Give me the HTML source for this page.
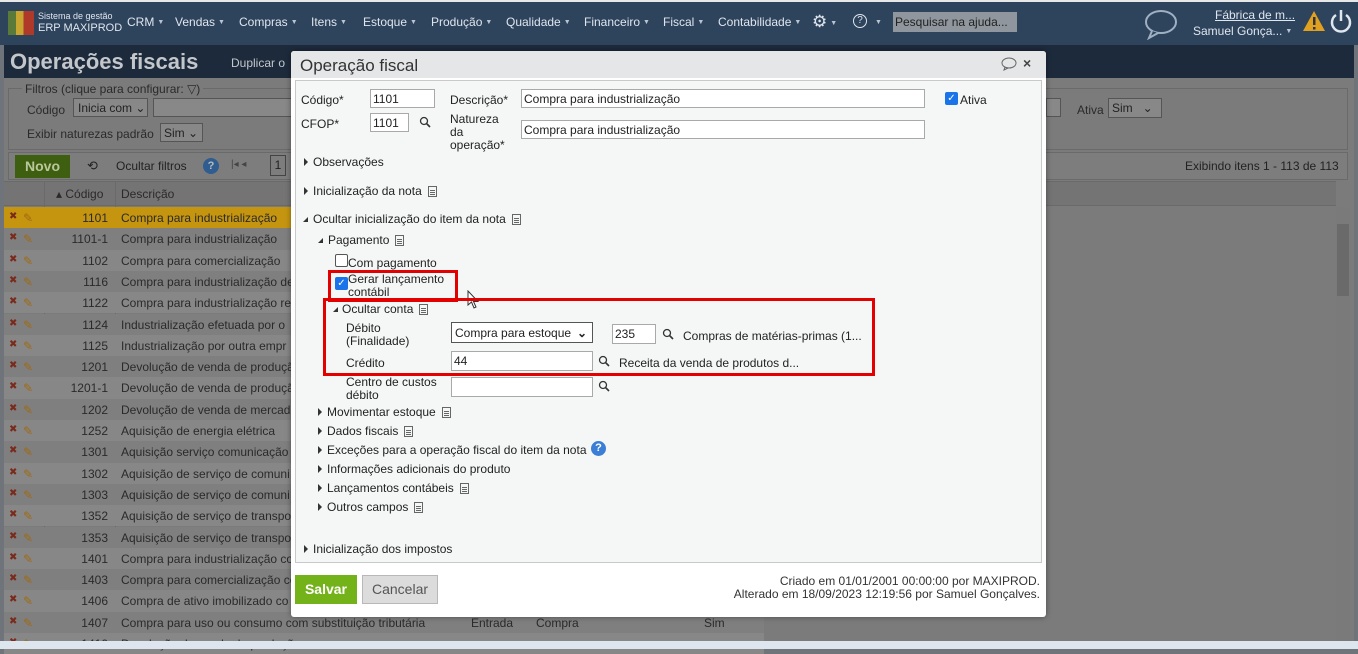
<!DOCTYPE html>
<html><head><meta charset="utf-8"><style>
*{box-sizing:border-box;margin:0;padding:0}
body{width:1358px;height:649px;overflow:hidden;position:relative;background:#6f747a;font-family:"Liberation Sans",sans-serif;font-size:12px;color:#222}
.a{position:absolute;white-space:nowrap}
.nav{left:0;top:0;width:1358px;height:45px;background:#2e435c;border-top:2px solid #e8e8e8;color:#dfe6ee;font-family:"Liberation Sans Narrow","Liberation Sans",sans-serif;font-size:12px}
.nav .a{top:13px}
.tri{font-size:7px;color:#b9c4d0;margin-left:3px;vertical-align:2px}
.page{left:4px;top:45px;width:1350px;height:596px;background:#7b7b7b}
.row{left:4px;width:760px;height:21.3px;font-size:12px;color:#2a2a2a}
.row span{position:absolute;top:4px}
.dlg{left:291px;top:51px;width:755px;height:566px;background:#fff;box-shadow:0 0 6px rgba(0,0,0,.4);border-radius:3px}
.lbl{font-size:12px;color:#222}
.inp{position:absolute;background:#fff;border:1px solid #a9a9a9;height:19px;font-size:12px;padding:2px 2px;color:#222}
.mag{position:absolute;width:12px;height:12px}
.doc{display:inline-block;width:9px;height:11px;border:1px solid #666;margin-left:6px;vertical-align:-2px;background:linear-gradient(#666,#666) 1px 3px/5px 1px no-repeat,linear-gradient(#666,#666) 1px 5px/5px 1px no-repeat,linear-gradient(#666,#666) 1px 7px/5px 1px no-repeat}
.rt{display:inline-block;width:0;height:0;border-top:4px solid transparent;border-bottom:4px solid transparent;border-left:4px solid #333;margin-right:5px;vertical-align:0}
.dn{display:inline-block;width:0;height:0;border-left:5px solid transparent;border-bottom:5px solid #333;margin-right:5px;vertical-align:1px}
</style></head><body>
<div class="a nav">
 <div class="a" style="left:8px;top:9px;width:26px;height:24px;background:linear-gradient(90deg,#5a7a3a 0 30%,#c9a630 30% 60%,#b03a2a 60%)"></div>
 <div class="a" style="left:38px;top:9px;font-size:9px">Sistema de gestão</div>
 <div class="a" style="left:38px;top:20px;font-size:11px">ERP MAXIPROD</div>
 <div class="a" style="left:127px">CRM<span class="tri">▼</span></div>
 <div class="a" style="left:175px">Vendas<span class="tri">▼</span></div>
 <div class="a" style="left:239px">Compras<span class="tri">▼</span></div>
 <div class="a" style="left:311px">Itens<span class="tri">▼</span></div>
 <div class="a" style="left:363px">Estoque<span class="tri">▼</span></div>
 <div class="a" style="left:431px">Produção<span class="tri">▼</span></div>
 <div class="a" style="left:506px">Qualidade<span class="tri">▼</span></div>
 <div class="a" style="left:584px">Financeiro<span class="tri">▼</span></div>
 <div class="a" style="left:663px">Fiscal<span class="tri">▼</span></div>
 <div class="a" style="left:718px">Contabilidade<span class="tri">▼</span></div>
 <div class="a" style="left:812px;top:10px;font-size:17px">⚙<span class="tri">▼</span></div>
 <div class="a" style="left:853px;top:12px;width:14px;height:14px;border:1.5px solid #dfe6ee;border-radius:50%;font-size:10px;text-align:center;line-height:11px">?</div>
 <div class="a" style="left:872px"><span class="tri">▼</span></div>
 <div class="a" style="left:893px;top:10px;width:124px;height:20px;background:#8f969d;color:#222;font-size:12px;padding:3px 2px">Pesquisar na ajuda...</div>
 <svg class="a" style="left:1143px;top:6px" width="36" height="32"><ellipse cx="18" cy="14" rx="15" ry="11" fill="none" stroke="#9fb0c2" stroke-width="2"/><path d="M9 23 L6 30 L15 25" fill="#2e435c" stroke="#9fb0c2" stroke-width="2"/></svg>
 <div class="a" style="left:1215px;top:6px;text-decoration:underline">Fábrica de m...</div>
 <div class="a" style="left:1193px;top:22px">Samuel Gonça...<span class="tri">▼</span></div>
 <svg class="a" style="left:1302px;top:8px" width="24" height="22"><path d="M12 1 L23 21 L1 21 Z" fill="#e0a020"/><rect x="11" y="7" width="2.5" height="8" fill="#333"/><rect x="11" y="17" width="2.5" height="2.5" fill="#333"/></svg>
 <svg class="a" style="left:1329px;top:6px" width="24" height="26"><path d="M7 7 A9 9 0 1 0 17 7" fill="none" stroke="#dfe6ee" stroke-width="2.5"/><line x1="12" y1="2" x2="12" y2="13" stroke="#dfe6ee" stroke-width="2.5"/></svg>
</div>
<div class="a page"></div>
<div class="a" style="left:4px;top:45px;width:1350px;height:33px;background:#1c2a3b"></div>
<div class="a" style="left:10px;top:49px;font-size:22px;font-weight:bold;color:#c3c7cb">Operações fiscais</div>
<div class="a" style="left:231px;top:56px;font-size:12px;color:#c3c7cb">Duplicar o</div>
<div class="a" style="left:8px;top:88px;width:1340px;height:62px;border:1px solid #6a6a6a"></div>
<div class="a" style="left:22px;top:82px;background:#7b7b7b;padding:0 3px;color:#2a2a2a">Filtros (clique para configurar: ▽)</div>
<div class="a" style="left:27px;top:103px;color:#2a2a2a">Código</div>
<div class="a" style="left:73px;top:98px;width:75px;height:19px;border:1px solid #555;background:#888;padding:2px 4px;color:#222">Inicia com ⌄</div>
<div class="a" style="left:153px;top:98px;width:140px;height:19px;border:1px solid #555;background:#888"></div>
<div class="a" style="left:27px;top:127px;color:#2a2a2a">Exibir naturezas padrão</div>
<div class="a" style="left:160px;top:123px;width:43px;height:19px;border:1px solid #555;background:#888;padding:2px 3px;color:#222">Sim ⌄</div>
<div class="a" style="left:1046px;top:98px;width:15px;height:19px;border:1px solid #555;background:#888"></div>
<div class="a" style="left:1077px;top:103px;color:#2a2a2a">Ativa</div>
<div class="a" style="left:1108px;top:98px;width:54px;height:20px;border:1px solid #555;background:#888;padding:2px 3px;color:#222">Sim&nbsp;&nbsp;&nbsp;⌄</div>
<div class="a" style="left:8px;top:152px;width:1340px;height:28px;border:1px solid #6a6a6a;background:#7d7d7d"></div>
<div class="a" style="left:15px;top:155px;width:55px;height:23px;background:#3f5f10;color:#b9c79b;font-weight:bold;font-size:14px;text-align:center;line-height:23px">Novo</div>
<div class="a" style="left:87px;top:158px;color:#222;font-size:13px">⟲</div>
<div class="a" style="left:116px;top:159px;color:#222">Ocultar filtros</div>
<div class="a" style="left:203px;top:158px;width:16px;height:16px;border-radius:50%;background:#2f5d8f;color:#bbb;font-size:11px;text-align:center;line-height:16px;font-weight:bold">?</div>
<div class="a" style="left:231px;top:159px;color:#444;font-size:10px">|◂ ◂</div>
<div class="a" style="left:270px;top:155px;width:16px;height:21px;border:1px solid #444;text-align:center;line-height:19px;color:#222">1</div>
<div class="a" style="left:1185px;top:159px;color:#222">Exibindo itens 1 - 113 de 113</div>
<div class="a" style="left:4px;top:181px;width:1332px;height:25px;background:#747474;border-top:1px solid #6a6a6a;border-bottom:1px solid #6a6a6a"></div>
<div class="a" style="left:44px;top:181px;width:1px;height:460px;background:#6a6a6a"></div>
<div class="a" style="left:115px;top:181px;width:1px;height:460px;background:#6a6a6a"></div>
<div class="a" style="left:56px;top:187px;color:#2a2a2a">▴ Código</div>
<div class="a" style="left:121px;top:187px;color:#2a2a2a">Descrição</div>
<div class="a" style="left:1336px;top:207px;width:14px;height:434px;background:#7a7a7a"></div>
<div class="a" style="left:1337px;top:224px;width:12px;height:72px;background:#6a6a6a"></div>
<div id="rows"></div>
<div class="a" style="left:0;top:641px;width:1358px;height:8px;background:#dde6ee"></div>
<script>
var r=[["1101","Compra para industrialização"],["1101-1","Compra para industrialização"],["1102","Compra para comercialização"],["1116","Compra para industrialização de"],["1122","Compra para industrialização re"],["1124","Industrialização efetuada por o"],["1125","Industrialização por outra empr"],["1201","Devolução de venda de produçã"],["1201-1","Devolução de venda de produçã"],["1202","Devolução de venda de mercad"],["1252","Aquisição de energia elétrica"],["1301","Aquisição serviço comunicação"],["1302","Aquisição de serviço de comuni"],["1303","Aquisição de serviço de comuni"],["1352","Aquisição de serviço de transpo"],["1353","Aquisição de serviço de transpo"],["1401","Compra para industrialização co"],["1403","Compra para comercialização co"],["1406","Compra de ativo imobilizado co"],["1407","Compra para uso ou consumo com substituição tributária"],["1410","Devolução de venda de produção"]];
var h="";for(var i=0;i<r.length;i++){var y=207+i*21.3;var bg=i==0?"#c59510":(i%2?"#7f7f7f":"#878787");
h+='<div class="a row" style="top:'+y+'px;background:'+bg+'"><span style="left:5px;color:#7a2a1a;font-size:10px">✖</span><span style="left:19px;color:#a06a10">✎</span><span style="right:656px;text-align:right">'+r[i][0]+'</span><span style="left:117px">'+r[i][1]+'</span>'+(i==19?'<span style="left:467px">Entrada</span><span style="left:532px">Compra</span><span style="left:700px">Sim</span>':'')+'</div>';}
document.getElementById("rows").innerHTML=h;
</script>
<div class="a dlg">
 <div class="a" style="left:0;top:0;width:755px;height:27px;background:#e4e6e8;border-radius:3px 3px 0 0"></div>
 <div class="a" style="left:9px;top:5px;font-size:17px;color:#333">Operação fiscal</div>
 <svg class="a" style="left:710px;top:6px" width="16" height="14"><ellipse cx="8" cy="6" rx="7" ry="5" fill="none" stroke="#666"/><path d="M4 10 L3 13 L7 11" fill="none" stroke="#666"/></svg>
 <div class="a" style="left:732px;top:4px;font-size:14px;color:#444;font-weight:bold">×</div>
 <div class="a" style="left:4px;top:29px;width:747px;height:483px;background:#f5f7f7;border:1px solid #c9c9c9"></div>
</div>
<div class="a lbl" style="left:301px;top:93px">Código*</div>
<div class="inp" style="left:370px;top:89px;width:65px">1101</div>
<div class="a lbl" style="left:450px;top:93px">Descrição*</div>
<div class="inp" style="left:521px;top:89px;width:404px">Compra para industrialização</div>
<div class="a" style="left:945px;top:92px;width:13px;height:13px;background:#1a73e8;border-radius:2px;color:#fff;font-size:10px;text-align:center;line-height:13px">✓</div>
<div class="a lbl" style="left:960px;top:93px">Ativa</div>
<div class="a lbl" style="left:301px;top:117px">CFOP*</div>
<div class="inp" style="left:370px;top:113px;width:39px">1101</div>
<svg class="mag" style="left:419px;top:116px"><circle cx="5" cy="5" r="3.5" fill="none" stroke="#333" stroke-width="1.3"/><line x1="7.5" y1="7.5" x2="11" y2="11" stroke="#333" stroke-width="1.6"/></svg>
<div class="a lbl" style="left:450px;top:113px;line-height:13px">Natureza<br>da<br>operação*</div>
<div class="inp" style="left:521px;top:120px;width:404px">Compra para industrialização</div>
<div class="a lbl" style="left:304px;top:155px"><span class="rt"></span>Observações</div>
<div class="a lbl" style="left:304px;top:184px"><span class="rt"></span>Inicialização da nota<span class="doc"></span></div>
<div class="a lbl" style="left:303px;top:212px"><span class="dn"></span>Ocultar inicialização do item da nota<span class="doc"></span></div>
<div class="a lbl" style="left:318px;top:233px"><span class="dn"></span>Pagamento<span class="doc"></span></div>
<div class="a" style="left:335px;top:254px;width:13px;height:13px;border:1px solid #555;background:#fff;border-radius:2px"></div>
<div class="a lbl" style="left:348px;top:256px">Com pagamento</div>
<div class="a" style="left:335px;top:277px;width:13px;height:13px;background:#1a73e8;border-radius:2px;color:#fff;font-size:10px;text-align:center;line-height:13px">✓</div>
<div class="a lbl" style="left:348px;top:273px;line-height:13px">Gerar lançamento<br>contábil</div>
<div class="a" style="left:328px;top:270px;width:130px;height:32px;border:3px solid #e30000"></div>
<svg class="a" style="left:467px;top:290px" width="14" height="20"><path d="M1 1 L1 15 L4.5 12 L7 18 L9 17 L6.5 11.5 L11 11.5 Z" fill="#fff" stroke="#333"/></svg>
<div class="a" style="left:323px;top:298px;width:552px;height:78px;border:3px solid #e30000"></div>
<div class="a lbl" style="left:333px;top:302px"><span class="dn" style="margin-right:4px"></span>Ocultar conta<span class="doc"></span></div>
<div class="a lbl" style="left:346px;top:322px;line-height:13px">Débito<br>(Finalidade)</div>
<div class="inp" style="left:451px;top:322px;width:142px;height:21px;border-color:#555;padding:3px">Compra para estoque<span style="position:absolute;right:5px;font-weight:bold">⌄</span></div>
<div class="inp" style="left:612px;top:324px;width:44px;height:20px">235</div>
<svg class="mag" style="left:662px;top:328px"><circle cx="5" cy="5" r="3.5" fill="none" stroke="#333" stroke-width="1.3"/><line x1="7.5" y1="7.5" x2="11" y2="11" stroke="#333" stroke-width="1.6"/></svg>
<div class="a lbl" style="left:683px;top:329px">Compras de matérias-primas (1...</div>
<div class="a lbl" style="left:346px;top:356px">Crédito</div>
<div class="inp" style="left:451px;top:351px;width:142px;height:20px">44</div>
<svg class="mag" style="left:598px;top:355px"><circle cx="5" cy="5" r="3.5" fill="none" stroke="#333" stroke-width="1.3"/><line x1="7.5" y1="7.5" x2="11" y2="11" stroke="#333" stroke-width="1.6"/></svg>
<div class="a lbl" style="left:619px;top:356px">Receita da venda de produtos d...</div>
<div class="a lbl" style="left:346px;top:376px;line-height:13px">Centro de custos<br>débito</div>
<div class="inp" style="left:451px;top:377px;width:142px;height:20px"></div>
<svg class="mag" style="left:598px;top:380px"><circle cx="5" cy="5" r="3.5" fill="none" stroke="#333" stroke-width="1.3"/><line x1="7.5" y1="7.5" x2="11" y2="11" stroke="#333" stroke-width="1.6"/></svg>
<div class="a lbl" style="left:318px;top:405px"><span class="rt"></span>Movimentar estoque<span class="doc"></span></div>
<div class="a lbl" style="left:318px;top:424px"><span class="rt"></span>Dados fiscais<span class="doc"></span></div>
<div class="a lbl" style="left:318px;top:443px"><span class="rt"></span>Exceções para a operação fiscal do item da nota</div>
<div class="a" style="left:591px;top:441px;width:15px;height:15px;border-radius:50%;background:#3a7fd5;color:#fff;font-size:11px;font-weight:bold;text-align:center;line-height:15px">?</div>
<div class="a lbl" style="left:318px;top:462px"><span class="rt"></span>Informações adicionais do produto</div>
<div class="a lbl" style="left:318px;top:481px"><span class="rt"></span>Lançamentos contábeis<span class="doc"></span></div>
<div class="a lbl" style="left:318px;top:500px"><span class="rt"></span>Outros campos<span class="doc"></span></div>
<div class="a lbl" style="left:304px;top:542px"><span class="rt"></span>Inicialização dos impostos</div>
<div class="a" style="left:295px;top:575px;width:62px;height:29px;background:#74b21a;color:#fff;font-weight:bold;font-size:14px;text-align:center;line-height:29px">Salvar</div>
<div class="a" style="left:362px;top:575px;width:76px;height:29px;background:#dcdcdc;border:1px solid #b8b8b8;color:#555;font-size:14px;text-align:center;line-height:27px">Cancelar</div>
<div class="a lbl" style="right:318px;top:575px;text-align:right;line-height:13px;color:#333">Criado em 01/01/2001 00:00:00 por MAXIPROD.<br>Alterado em 18/09/2023 12:19:56 por Samuel Gonçalves.</div>
</body></html>
